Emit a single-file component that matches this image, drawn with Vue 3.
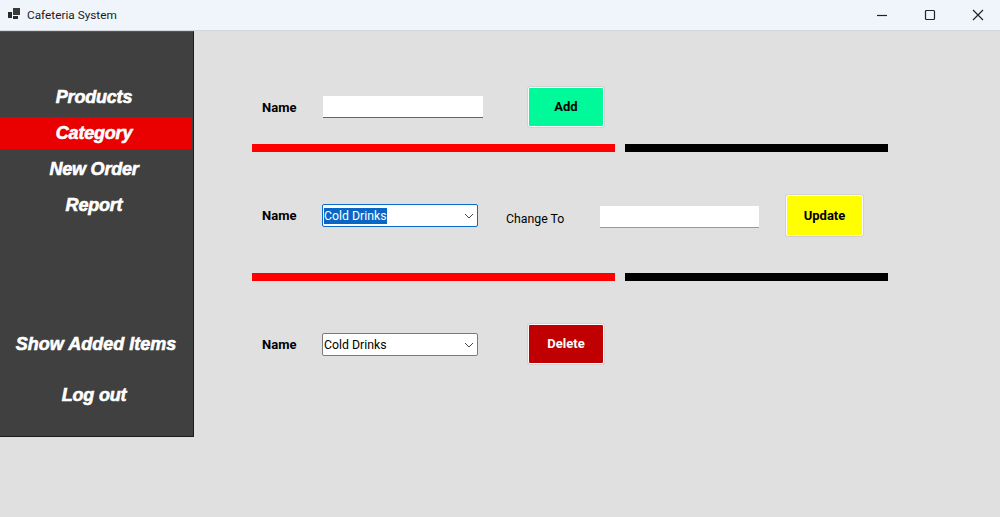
<script setup>
const nav = [
  { label: 'Products' },
  { label: 'Category', active: true },
  { label: 'New Order' },
  { label: 'Report' },
]
</script>

<template>
  <div class="window">
    <header class="titlebar">
      <div class="title">
        <svg class="app-icon" width="13" height="12" viewBox="0 0 13 12">
          <rect x="0" y="4" width="4" height="6" fill="#2b2b2b" />
          <rect x="5" y="0" width="7" height="7" fill="#3a3a3a" />
          <rect x="5" y="8" width="5" height="3" fill="#2b2b2b" />
        </svg>
        <span>Cafeteria System</span>
      </div>
      <div class="controls">
        <svg width="12" height="12" viewBox="0 0 12 12"><path d="M1 6.5h10" stroke="#222" stroke-width="1.2" /></svg>
        <svg width="12" height="12" viewBox="0 0 12 12"><rect x="1.5" y="1.5" width="9" height="9" rx="1" fill="none" stroke="#222" stroke-width="1.2" /></svg>
        <svg width="12" height="12" viewBox="0 0 12 12"><path d="M1 1l10 10M11 1L1 11" stroke="#222" stroke-width="1.2" /></svg>
      </div>
    </header>

    <div class="body">
      <aside class="sidebar">
        <nav class="nav">
          <div v-for="item in nav" :key="item.label" class="nav-item" :class="{ active: item.active }">{{ item.label }}</div>
        </nav>
        <div class="nav-bottom">
          <div class="nav-item wide">Show Added Items</div>
          <div class="nav-item">Log out</div>
        </div>
      </aside>

      <main class="main">
        <section class="row row-add">
          <label class="label">Name</label>
          <input class="text-input first" type="text" />
          <button class="btn add">Add</button>
        </section>
        <div class="divider first-div"><span class="red"></span><span class="black"></span></div>

        <section class="row row-update">
          <label class="label">Name</label>
          <div class="combo focused">
            <span class="selected">Cold Drinks</span>
            <svg width="10" height="6" viewBox="0 0 10 6"><path d="M1 1l4 4 4-4" fill="none" stroke="#444" stroke-width="1" /></svg>
          </div>
          <span class="change">Change To</span>
          <input class="text-input second" type="text" />
          <button class="btn update">Update</button>
        </section>
        <div class="divider second-div"><span class="red"></span><span class="black"></span></div>

        <section class="row row-delete">
          <label class="label">Name</label>
          <div class="combo">
            <span>Cold Drinks</span>
            <svg width="10" height="6" viewBox="0 0 10 6"><path d="M1 1l4 4 4-4" fill="none" stroke="#444" stroke-width="1" /></svg>
          </div>
          <button class="btn delete">Delete</button>
        </section>
      </main>
    </div>
  </div>
</template>

<style scoped>
.window {
  width: 1000px;
  height: 517px;
  display: flex;
  flex-direction: column;
  background: #e0e0e0;
  overflow: hidden;
  font-family: "Roboto", "Noto Sans", sans-serif;
  color: #000;
}
.titlebar {
  height: 31px;
  box-sizing: border-box;
  flex: none;
  display: flex;
  align-items: center;
  justify-content: space-between;
  background: #f0f4fb;
  border-bottom: 1px solid #d4d6da;
}
.title {
  display: flex;
  align-items: center;
  gap: 6px;
  padding-left: 8px;
  font-size: 11.8px;
  color: #1a1a1a;
}
.app-icon { margin-top: -2px; }
.controls {
  display: flex;
  gap: 36px;
  padding-right: 16px;
}
.body {
  flex: 1;
  display: flex;
  align-items: flex-start;
}
.sidebar {
  width: 194px;
  height: 406px;
  box-sizing: border-box;
  flex: none;
  background: #404040;
  border-right: 1px solid #1c1c1c;
  border-bottom: 1px solid #1c1c1c;
  border-top: 1px solid #555;
  padding: 49px 1px 0 0;
  display: flex;
  flex-direction: column;
}
.nav {
  display: flex;
  flex-direction: column;
  gap: 4px;
}
.nav-item {
  height: 32px;
  line-height: 33px;
  padding-right: 4px;
  text-align: center;
  color: #fff;
  font-family: "Liberation Sans", Arial, sans-serif;
  font-weight: 700;
  font-style: italic;
  font-size: 18px;
  letter-spacing: -0.2px;
  -webkit-text-stroke: 0.6px #fff;
}
.nav-item.wide { padding-right: 0; letter-spacing: 0; }
.nav-item.active { background: #e90000; }
.nav-bottom {
  margin-top: 107px;
  display: flex;
  flex-direction: column;
  gap: 19px;
}
.main {
  flex: 1;
  padding: 55px 0 0 58px;
  display: flex;
  flex-direction: column;
}
.row {
  display: flex;
  align-items: center;
  padding-left: 10px;
  height: 41px;
  font-size: 12.3px;
}
.label {
  width: 60px;
  flex: none;
  font-weight: 700;
  font-size: 13px;
}
.row-add .label { margin-top: 1px; }
.text-input {
  width: 160px;
  height: 22px;
  box-sizing: border-box;
  border: none;
  border-bottom: 1px solid #666;
  background: #fff;
  padding: 0;
  outline: none;
  display: block;
}
.first { margin-left: 1px; margin-right: 45px; }
.second {
  width: 159px;
  margin-top: 2px;
  margin-right: 27px;
  border-bottom-color: #999;
}
.combo {
  width: 156px;
  height: 23px;
  box-sizing: border-box;
  border: 1px solid #7a7a7a;
  border-radius: 2px;
  background: #fff;
  display: flex;
  align-items: center;
  justify-content: space-between;
  padding: 0 3px 0 1px;
  font-size: 12.3px;
  margin-right: 50px;
}
.combo.focused { border-color: #0a6cc8; margin-right: 28px; }
.selected {
  background: #0a66c6;
  color: #fff;
  line-height: 16px;
}
.change {
  width: 94px;
  flex: none;
  font-size: 12.3px;
  margin-top: 7px;
}
.btn {
  width: 76px;
  height: 40px;
  box-sizing: border-box;
  border: 1px solid #fbfbfb;
  border-radius: 2px;
  box-shadow: 0 0 0 1px #d2d2d2;
  font-family: inherit;
  font-weight: 700;
  font-size: 13px;
  padding: 0;
}
.add { background: #00fa9a; color: #000; }
.update { background: #ffff00; color: #000; width: 77px; height: 41px; }
.delete { background: #c00000; color: #fff; margin-bottom: 2px; }
.divider {
  display: flex;
  gap: 10px;
  height: 8px;
}
.red { width: 363px; background: #ff0000; }
.black { width: 263px; background: #000; }
.first-div { margin-top: 17px; }
.second-div { margin-top: 37px; }
.row-update { margin-top: 43px; }
.row-delete { margin-top: 43px; }
</style>

<style>
html, body { margin: 0; background: #e0e0e0; }
</style>
